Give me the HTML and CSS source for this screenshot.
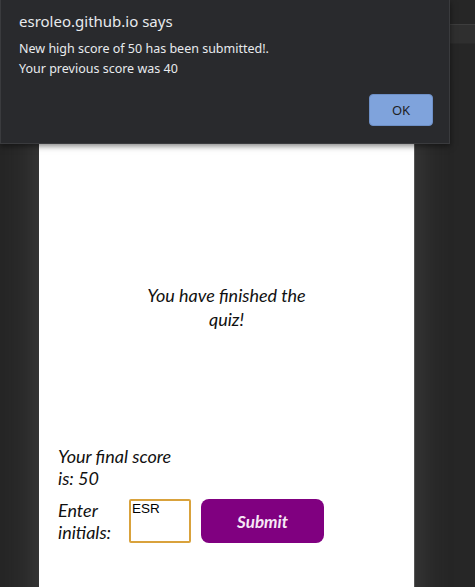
FILE: index.html
```html
<!DOCTYPE html>
<html>
<head>
<meta charset="utf-8">
<link rel="stylesheet" href="styles.css">
</head>
<body>
<div class="topbar"></div>
<main class="card">
  <h1 class="done">You have finished the quiz!</h1>
  <p class="score">Your final score is: 50</p>
  <div class="entry">
    <label class="entry-label" for="initials">Enter initials:</label>
    <textarea id="initials" class="initials" readonly>ESR</textarea>
    <button class="submit">Submit</button>
  </div>
</main>
<div class="dialog">
  <div class="dialog-title">esroleo.github.io says</div>
  <div class="dialog-msg">New high score of 50 has been submitted!.</div>
  <div class="dialog-msg">Your previous score was 40</div>
  <div class="dialog-actions"><button class="ok">OK</button></div>
</div>
</body>
</html>
```
FILE: styles.css
```css
html, body {
  margin: 0;
  padding: 0;
  height: 100%;
  overflow: hidden;
}
body {
  background: #262626;
  font-family: "Lato", "Noto Sans", sans-serif;
}
.topbar {
  margin-top: 24px;
  height: 18px;
  background: #2f2f2f;
  border-top: 1px solid #3d3d3d;
  border-bottom: 1px solid #2a2a2a;
}
.card {
  width: 375px;
  margin: 30px 0 0 39px;
  padding: 209px 19px 0;
  box-sizing: border-box;
  height: 700px;
  background: #ffffff;
  box-shadow: 0 0 30px 4px rgba(90, 90, 90, 0.45), 1px 0 0 #555;
  color: #111;
}
.done {
  margin: 0 auto;
  width: 180px;
  text-align: center;
  font-style: italic;
  font-weight: normal;
  font-size: 18px;
  line-height: 24px;
}
.score {
  margin: 114px 0 0;
  width: 125px;
  font-style: italic;
  font-size: 18px;
  line-height: 22px;
}
.entry {
  margin-top: 10px;
  display: flex;
  align-items: flex-start;
}
.entry-label {
  width: 64px;
  margin-right: 7px;
  font-style: italic;
  font-size: 18px;
  line-height: 22px;
}
.initials {
  width: 62px;
  height: 44px;
  box-sizing: border-box;
  border: 2px solid #d9a23c;
  border-radius: 2px;
  padding: 0 1px;
  margin: 0;
  resize: none;
  font-family: "Liberation Sans", Arial, sans-serif;
  font-size: 13.5px;
  line-height: 15px;
  color: #000;
  background: #fff;
  outline: none;
}
.submit {
  margin-left: 10px;
  width: 123px;
  height: 44px;
  border: none;
  border-radius: 8px;
  background: #800080;
  color: #f6e8f6;
  font-family: "Lato", sans-serif;
  font-style: italic;
  font-weight: bold;
  font-size: 17px;
}
.dialog {
  position: absolute;
  left: 0;
  top: 0;
  width: 450px;
  height: 144px;
  box-sizing: border-box;
  background: #292a2d;
  border: 1px solid #3a3b3e;
  border-top: none;
  box-shadow: 0 2px 6px rgba(0, 0, 0, 0.5);
  padding: 11px 17px 0 18px;
  color: #e8eaed;
  font-family: "Noto Sans", "Open Sans", sans-serif;
}
.dialog-title {
  font-size: 15px;
  line-height: 20px;
  margin-bottom: 8px;
}
.dialog-msg {
  font-size: 12.5px;
  line-height: 20px;
}
.dialog-actions {
  display: flex;
  justify-content: flex-end;
  margin-top: 15px;
}
.ok {
  width: 64px;
  height: 32px;
  border: 1px solid #6d8fc6;
  border-radius: 4px;
  background: #7fa3dc;
  color: #202124;
  font-family: "Noto Sans", sans-serif;
  font-size: 13px;
  margin-right: -1px;
}
```
